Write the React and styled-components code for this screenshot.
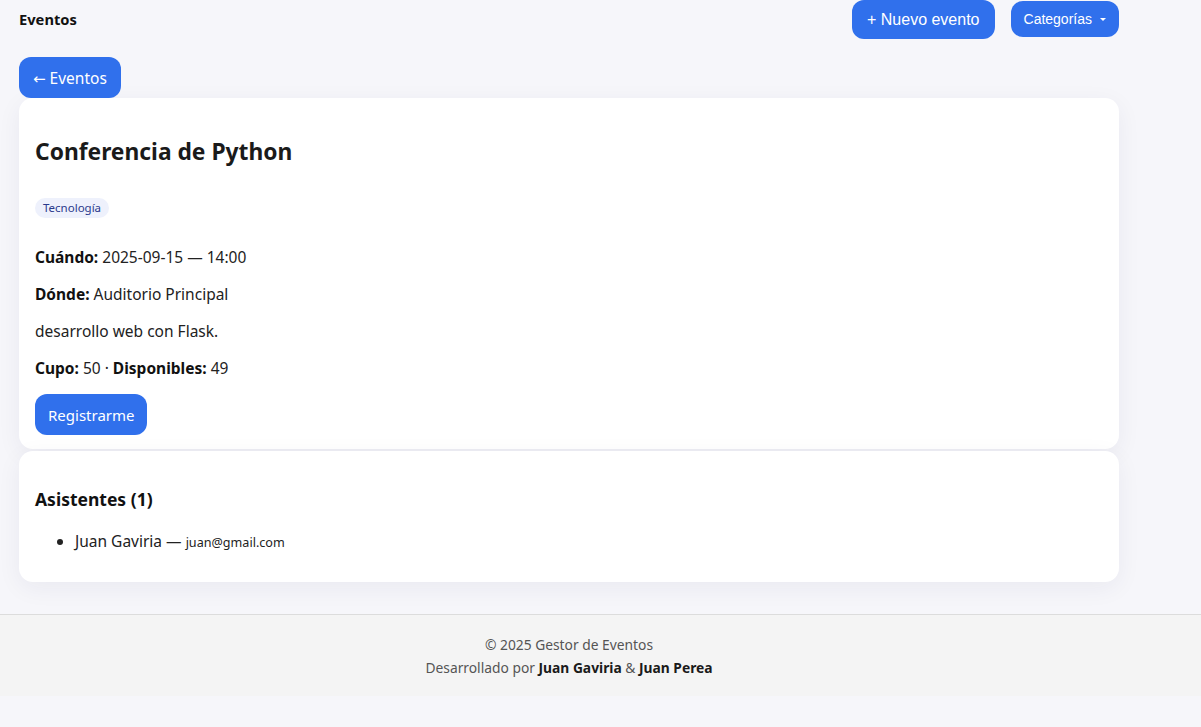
import React from "react";
import styled, { createGlobalStyle } from "styled-components";

const Global = createGlobalStyle`
  html, body { margin: 0; padding: 0; }
  body {
    background: #f6f6fa;
    font-family: "Noto Sans", "Open Sans", sans-serif;
    color: #1f1f1f;
    font-size: 16px;
  }
`;

const Page = styled.div`
  min-height: 727px;
  display: flex;
  flex-direction: column;
`;

const Container = styled.div`
  width: 1100px;
  margin-left: 19px;
`;

const Header = styled.header`
  display: flex;
  align-items: flex-start;
  justify-content: space-between;
  height: 39px;
`;

const Brand = styled.div`
  font-weight: 700;
  font-size: 14.7px;
  line-height: 39px;
  color: #111;
`;

const HeaderActions = styled.div`
  display: flex;
  align-items: flex-start;
  gap: 16px;
`;

const Button = styled.button`
  background: #3070ec;
  color: #fff;
  border: none;
  border-radius: ${(p) => p.$radius || 12}px;
  font-family: ${(p) => (p.$arial ? '"Liberation Sans", Arial, sans-serif' : '"Noto Sans", sans-serif')};
  font-size: ${(p) => p.$size || 16}px;
  font-weight: ${(p) => p.$weight || 400};
  height: ${(p) => p.$h || 41}px;
  padding: 0 ${(p) => p.$px || 14}px;
  margin-top: ${(p) => p.$mt || 0}px;
  cursor: pointer;
  display: inline-flex;
  align-items: center;
  gap: 8px;
`;

const Arrow = styled.span`
  font-family: "DejaVu Sans", sans-serif;
  font-size: 15px;
`;

const Caret = styled.span`
  display: inline-block;
  width: 0;
  height: 0;
  border-left: 3px solid transparent;
  border-right: 3px solid transparent;
  border-top: 3px solid #fff;
  margin-top: 1px;
`;

const BackRow = styled.div`
  margin-top: 18px;
`;

const Card = styled.section`
  background: #fff;
  border-radius: 14px;
  box-shadow: 0 6px 24px rgba(40, 40, 90, 0.06);
  padding: 16px 16px ${(p) => p.$pb || 16}px;
  margin-bottom: 2px;
`;

const Title = styled.h1`
  font-size: 22.8px;
  line-height: 32px;
  font-weight: 700;
  margin: 22px 0 0;
  color: #1a1a1a;
`;

const Tag = styled.span`
  display: inline-block;
  margin-top: 30px;
  height: 20px;
  line-height: 20px;
  padding: 0 8px;
  border-radius: 10px;
  background: #eef1fc;
  color: #2b3a8c;
  font-size: 11.5px;
`;

const Info = styled.p`
  margin: ${(p) => p.$mt || 16}px 0 0;
  font-size: 15.5px;
  line-height: 21px;
  color: #222;
  b { font-weight: 700; color: #111; }
`;

const SubTitle = styled.h3`
  font-size: 17.5px;
  line-height: 25px;
  font-weight: 700;
  margin: 19.5px 0 0;
  color: #111;
`;

const List = styled.ul`
  margin: 19px 0 13px;
  padding-left: 40px;
`;

const Item = styled.li`
  font-size: 15.5px;
  line-height: 21px;
  color: #222;
`;

const Small = styled.small`
  font-size: 12.6px;
`;

const Footer = styled.footer`
  margin-top: 30px;
  border-top: 1px solid #dcdcdc;
  background: #f4f4f4;
  padding: 18px 0 17px;
`;

const FooterInner = styled.div`
  width: 1100px;
  margin-left: 19px;
  text-align: center;
  font-size: 13.8px;
  line-height: 23px;
  color: #555;
  b { color: #1a1a1a; font-weight: 700; }
`;

export default function App() {
  return (
    <Page>
      <Global />
      <Container>
        <Header>
          <Brand>Eventos</Brand>
          <HeaderActions>
            <Button $arial $h={39} $px={15} $radius={12}>+ Nuevo evento</Button>
            <Button $arial $h={36} $px={13} $size={14} $weight={500} $mt={1} $radius={12}>
              Categorías <Caret />
            </Button>
          </HeaderActions>
        </Header>
        <BackRow>
          <Button $h={41} $px={14} $size={15.5}><span><Arrow>←</Arrow> Eventos</span></Button>
        </BackRow>
        <Card $pb={14}>
          <Title>Conferencia de Python</Title>
          <Tag>Tecnología</Tag>
          <Info $mt={29}><b>Cuándo:</b> 2025-09-15 — 14:00</Info>
          <Info><b>Dónde:</b> Auditorio Principal</Info>
          <Info>desarrollo web con Flask.</Info>
          <Info><b>Cupo:</b> 50 · <b>Disponibles:</b> 49</Info>
          <Button $h={41} $px={13} $size={15} $mt={15}>Registrarme</Button>
        </Card>
        <Card>
          <SubTitle>Asistentes (1)</SubTitle>
          <List>
            <Item>Juan Gaviria — <Small>juan@gmail.com</Small></Item>
          </List>
        </Card>
      </Container>
      <Footer>
        <FooterInner>
          <div>© 2025 Gestor de Eventos</div>
          <div>Desarrollado por <b>Juan Gaviria</b> &amp; <b>Juan Perea</b></div>
        </FooterInner>
      </Footer>
    </Page>
  );
}
